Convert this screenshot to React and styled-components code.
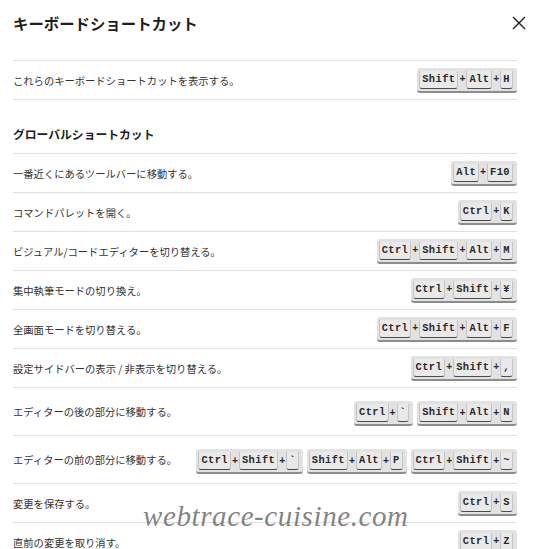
import React from "react";
import styled, { createGlobalStyle } from "styled-components";

const GlobalStyle = createGlobalStyle`
	body {
		margin: 0;
		background: #fff;
		font-family: "Noto Sans CJK JP", "Noto Sans", sans-serif;
		color: #333;
	}
`

const Modal = styled.div`
	position: relative;
	width: 540px;
	height: 549px;
	overflow: hidden;
	background: #fff;
`

const Header = styled.div`
	display: flex;
	align-items: center;
	justify-content: space-between;
	height: 46px;
	padding: 0 9px 0 13px;
`

const Title = styled.h1`
	margin: 0;
	font-size: 15.4px;
	font-weight: 700;
	color: #1e1e1e;
`

const CloseButton = styled.button`
	display: flex;
	align-items: center;
	justify-content: center;
	width: 24px;
	height: 24px;
	padding: 0;
	border: none;
	background: none;
	color: #1e1e1e;
`

const Body = styled.div`
	padding: 14px 23px 0 13px;
`

const Section = styled.section`
	border-top: 1px solid #e0e0e0;
`

const Heading = styled.h2`
	margin: 0;
	padding: 25px 0 11px;
	font-size: 11.8px;
	font-weight: 700;
	color: #1e1e1e;
	border-bottom: 1px solid #e0e0e0;
`

const Row = styled.div`
	display: flex;
	align-items: center;
	justify-content: space-between;
	min-height: ${p => (p.$tall ? "47px" : "38px")};
	border-bottom: 1px solid #e0e0e0;
	font-size: 10.3px;
	color: #333;
	white-space: nowrap;
`

const Combos = styled.div`
	display: flex;
	gap: 4px;
	padding-top: ${p => (p.$tall ? "4px" : "0")};
`

const Combo = styled.kbd`
	display: inline-flex;
	align-items: center;
	height: 22px;
	padding: 1px 4px 0 2px;
	background: #e2e2e2;
	border-radius: 3px;
	border-bottom: 2px solid #8c8c8c;
	font-family: "Liberation Mono", "DejaVu Sans Mono", monospace;
	font-size: 10.4px;
	font-weight: 700;
	color: #2a2a2a;
`

const Key = styled.span`
	display: inline-block;
	height: 17px;
	line-height: 17px;
	padding: 0 2px;
	letter-spacing: 0.4px;
	background: #e9e9e9;
	border: 1px solid transparent;
	border-left-color: #c4c4c4;
	border-right-color: #c4c4c4;
	border-bottom-color: #4a4a4a;
	border-top: none;
	border-radius: 0 0 3px 3px;
`

const Plus = styled.span`
	margin: 0 1px;
	font-size: 10px;
`

const Watermark = styled.div`
	position: absolute;
	left: 143px;
	top: 500px;
	font-family: "Liberation Serif", serif;
	font-style: italic;
	font-size: 29px;
	letter-spacing: 0.6px;
	color: rgba(90, 90, 90, 0.75);
	pointer-events: none;
`

const Shortcut = ({ keys }) => (
	<Combo>
		{keys.map((k, i) => (
			<React.Fragment key={i}>
				{i > 0 && <Plus>+</Plus>}
				<Key>{k}</Key>
			</React.Fragment>
		))}
	</Combo>
)

const globalShortcuts = [
	{ label: "一番近くにあるツールバーに移動する。", combos: [["Alt", "F10"]] },
	{ label: "コマンドパレットを開く。", combos: [["Ctrl", "K"]] },
	{ label: "ビジュアル/コードエディターを切り替える。", combos: [["Ctrl", "Shift", "Alt", "M"]] },
	{ label: "集中執筆モードの切り換え。", combos: [["Ctrl", "Shift", "¥"]] },
	{ label: "全画面モードを切り替える。", combos: [["Ctrl", "Shift", "Alt", "F"]] },
	{ label: "設定サイドバーの表示 / 非表示を切り替える。", combos: [["Ctrl", "Shift", ","]] },
	{ label: "エディターの後の部分に移動する。", combos: [["Ctrl", "`"], ["Shift", "Alt", "N"]], tall: true },
	{ label: "エディターの前の部分に移動する。", combos: [["Ctrl", "Shift", "`"], ["Shift", "Alt", "P"], ["Ctrl", "Shift", "~"]], tall: true },
	{ label: "変更を保存する。", combos: [["Ctrl", "S"]] },
	{ label: "直前の変更を取り消す。", combos: [["Ctrl", "Z"]] },
]

const ShortcutRow = ({ label, combos, tall }) => (
	<Row $tall={tall}>
		<span>{label}</span>
		<Combos $tall={tall}>
			{combos.map((keys, i) => <Shortcut key={i} keys={keys} />)}
		</Combos>
	</Row>
)

const App = () => {
	return (
		<Modal>
			<GlobalStyle />
			<Header>
				<Title>キーボードショートカット</Title>
				<CloseButton aria-label="閉じる">
					<svg width="16" height="16" viewBox="0 0 16 16" fill="none" stroke="currentColor" strokeWidth="1.4">
						<path d="M2 2 L14 14 M14 2 L2 14" />
					</svg>
				</CloseButton>
			</Header>
			<Body>
				<Section>
					<ShortcutRow label="これらのキーボードショートカットを表示する。" combos={[["Shift", "Alt", "H"]]} />
				</Section>
				<Heading>グローバルショートカット</Heading>
				{globalShortcuts.map((s, i) => (
					<ShortcutRow key={i} {...s} />
				))}
			</Body>
			<Watermark>webtrace-cuisine.com</Watermark>
		</Modal>
	)
}

export default App
